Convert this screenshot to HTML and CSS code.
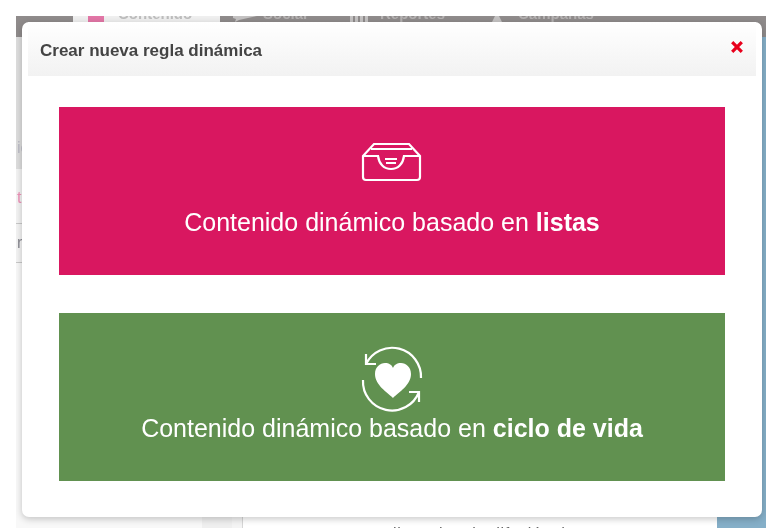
FILE: index.html
```html
<!DOCTYPE html>
<html lang="es">
<head>
<meta charset="utf-8">
<title>Crear nueva regla dinámica</title>
<link rel="stylesheet" href="styles.css">
</head>
<body>
<div class="page">
  <div class="topbar">
    <div class="tab tab-first"></div>
    <div class="tab tab-active"><i class="tab-icon"></i><span class="tab-label">Contenido</span></div>
    <div class="tab tab-social">
      <svg class="tab-glyph glyph-social" viewBox="0 0 24 6"><path d="M0 0H24L6 4 2 6 3 3 0 2Z"/></svg>
      <span class="tab-label">Social</span>
    </div>
    <div class="tab tab-reports">
      <svg class="tab-glyph glyph-reports" viewBox="0 0 20 6"><path d="M0 0H3V6H0ZM5 0H8V6H5ZM10 0H13V6H10ZM15 0H18V6H15Z"/></svg>
      <span class="tab-label">Reportes</span>
    </div>
    <div class="tab tab-camp">
      <svg class="tab-glyph glyph-camp" viewBox="0 0 10 6"><path d="M3 0H7L10 6H0Z"/></svg>
      <span class="tab-label">Campañas</span>
    </div>
  </div>
  <div class="main">
    <div class="sidebar">
      <div class="side-row side-a">ic</div>
      <div class="side-row side-b">t</div>
      <div class="side-row side-c">r</div>
    </div>
    <div class="rail rail-a"></div>
    <div class="rail rail-b"></div>
    <div class="content"><p class="content-text">talle activar la difusión d</p></div>
    <div class="aside"></div>
  </div>
  <div class="modal">
    <div class="modal-head">
      <h1 class="modal-title">Crear nueva regla dinámica</h1>
      <svg class="close" viewBox="0 0 14 14" aria-label="Cerrar"><path d="M2.2 2.2 11.8 11.8M11.8 2.2 2.2 11.8"/></svg>
    </div>
    <div class="modal-body">
      <div class="card card-pink">
        <svg class="icon icon-inbox" viewBox="0 0 62 42">
          <path d="M2 15 13 3H48L59 15V36a3 3 0 0 1-3 3H5a3 3 0 0 1-3-3Z"/>
          <path d="M2 15H17C18 23 23 28 30 28C37 28 42 23 43 15H59"/>
          <path d="M10 8H51M24 18H36M25 22H35"/>
        </svg>
        <p class="card-text">Contenido dinámico basado en <b>listas</b></p>
      </div>
      <div class="card card-green">
        <svg class="icon icon-cycle" viewBox="0 0 62 62">
          <path d="M5 16A29 29 0 0 1 60 30M5 6V16H15"/>
          <path d="M2 32A29 29 0 0 0 58 44M48 44H58V54"/>
          <path class="heart" d="M32 50C26 44 14 37 14 26C14 19 19 15 24 15C28 15 31 17 32 20C33 17 36 15 40 15C45 15 50 19 50 26C50 37 38 44 32 50Z"/>
        </svg>
        <p class="card-text">Contenido dinámico basado en <b>ciclo de vida</b></p>
      </div>
    </div>
  </div>
</div>
</body>
</html>
```
FILE: styles.css
```css
* { box-sizing: border-box; }
html, body { margin: 0; height: 100%; background: #fff; }
body { padding: 16px 12px 4px 16px; font-family: "Liberation Sans", Arial, sans-serif; overflow: hidden; }

.page {
  position: relative;
  width: 750px;
  height: 512px;
  overflow: hidden;
  display: flex;
  flex-direction: column;
  background: #fff;
  filter: blur(0.4px);
}

/* Dimmed application behind the dialog */
.topbar { display: flex; height: 21px; flex: none; background: #8f8b8b; line-height: 0; font-size: 15px; font-weight: bold; color: #b5b2b2; }
.tab { display: flex; align-items: flex-start; }
.tab-label { display: block; margin-top: -2px; }
.tab-first { width: 57px; }
.tab-active { width: 147px; background: #efefef; padding-left: 45px; color: #bdbdbd; position: relative; }
.tab-icon { position: absolute; left: 15px; top: 0; width: 16px; height: 6px; background: #e276a6; }
.tab-glyph { display: block; flex: none; height: 6px; fill: #c4c2c2; }
.tab-social { width: 130px; padding-left: 13px; }
.glyph-social { width: 24px; margin-right: 6px; }
.tab-reports { width: 142px; }
.glyph-reports { width: 20px; margin-right: 10px; }
.tab-camp { flex: 1; }
.glyph-camp { width: 10px; margin-right: 16px; }

.main { flex: 1; display: flex; min-height: 0; }
.sidebar { width: 186px; flex: none; display: flex; flex-direction: column; font-size: 16px; background: #f8f8f8; }
.side-row { padding-left: 1px; display: flex; align-items: center; }
.side-a { height: 132px; background: #dddddd; color: #bcbcc6; padding-top: 90px; }
.side-b { height: 55px; background: #f3f3f3; color: #ee92b8; border-bottom: 1px solid #c8c8c8; padding-top: 4px; }
.side-c { height: 39px; background: #f3f3f3; color: #8a8a92; border-bottom: 1px solid #c8c8c8; }
.rail { flex: none; background: #efefef; }
.rail-a { width: 30px; }
.rail-b { width: 11px; background: #f4f4f4; border-right: 1px solid #d6d6d6; }
.content { flex: 1; display: flex; align-items: flex-end; justify-content: center; background: #fff; padding-right: 16px; }
.content-text { margin: 0 0 -15px; font-size: 16px; line-height: 18px; color: #666; white-space: nowrap; letter-spacing: .6px; }
.aside { width: 49px; flex: none; background: #85afc8; }

/* Dialog */
.modal {
  position: absolute;
  left: 6px;
  top: 6px;
  width: 740px;
  height: 495px;
  background: #fff;
  border-radius: 7px;
  box-shadow: 0 2px 7px rgba(0, 0, 0, .22);
}
.modal-head {
  height: 54px;
  margin: 0 6px;
  padding: 0 12px;
  display: flex;
  align-items: center;
  justify-content: space-between;
  background: linear-gradient(#ffffff, #f2f2f2);
}
.modal-title { margin: 3px 0 0; font-size: 17px; font-weight: bold; color: #444; }
.close { width: 14px; height: 14px; margin-top: -4px; }
.close path { fill: none; stroke: #e8001c; stroke-width: 3.2; }

.modal-body { padding: 31px 37px 36px; display: flex; flex-direction: column; gap: 38px; }
.card { height: 168px; display: flex; flex-direction: column; align-items: center; color: #fff; }
.card-pink { background: #d91760; padding-top: 34px; }
.card-green { background: #619150; padding-top: 35px; }
.icon { display: block; flex: none; fill: none; stroke: #fff; stroke-width: 2.2; overflow: visible; }
.icon-inbox { width: 62px; height: 42px; margin-bottom: 25px; }
.icon-cycle { width: 62px; height: 62px; margin-bottom: 4px; }
.heart { fill: #fff; stroke: none; }
.card-text { margin: 0; font-size: 25px; line-height: 28px; white-space: nowrap; }
```
